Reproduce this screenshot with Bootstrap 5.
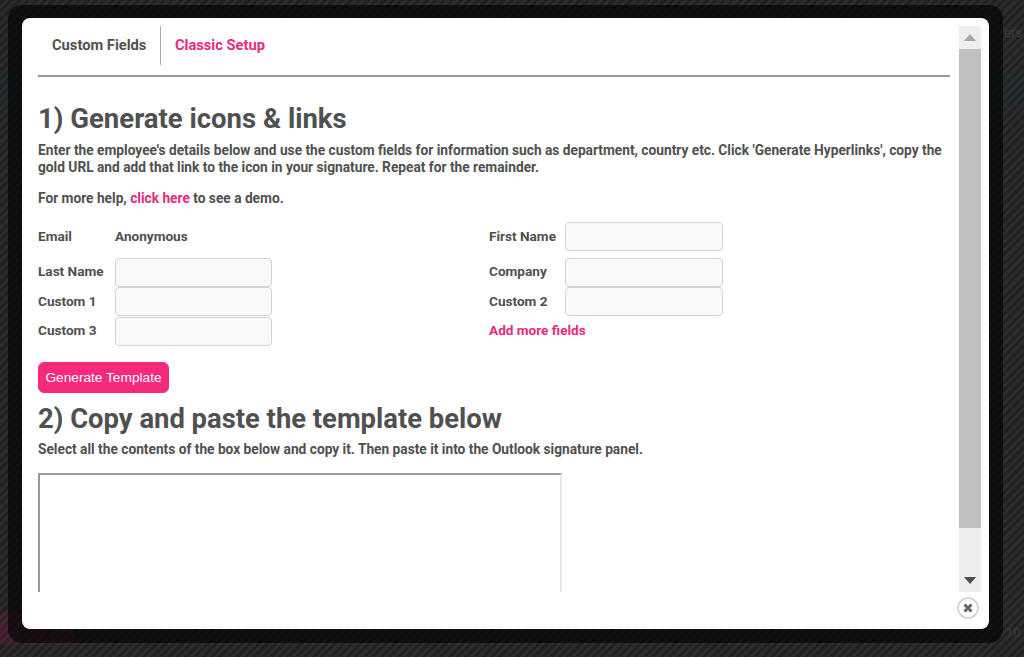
<!DOCTYPE html>
<html lang="en">
<head>
  <meta charset="UTF-8">
  <title>Signature setup</title>
  <link href="https://cdn.jsdelivr.net/npm/bootstrap@5.3.0/dist/css/bootstrap.min.css" rel="stylesheet">
  <style>
    html, body { height: 657px; overflow: hidden; }
    body {
      font-family: Roboto, "Liberation Sans", sans-serif;
      color: #505050;
      background: repeating-linear-gradient(-45deg, #2c2c2c 0 3px, #212121 3px 6px);
    }
    a { color: #e9297f; text-decoration: none; }

    /* what shows faintly behind the overlay */
    .under-band { position: absolute; left: 0; right: 0; top: 73px; height: 35px; background: rgba(0, 70, 80, .14); }
    .under-btn { position: absolute; top: 612px; width: 24px; height: 33px; border-radius: 5px; background: rgba(150, 20, 80, .22); }
    .under-text { position: absolute; color: #3a3a3a; font-size: 13px; white-space: nowrap; }

    .modal-shell {
      position: absolute; left: 8px; top: 5px; width: 995px; height: 638px;
      padding: 13px 14px;
      border-radius: 14px;
      background: rgba(0, 0, 0, .62);
    }
    .modal-sheet {
      position: relative; height: 611px;
      padding: 8px 8px 37px 16px;
      background: #fff;
      border-radius: 8px;
    }
    .scroll-view { height: 566px; overflow: hidden; }
    .scroll-body { flex: 0 0 912px; width: 912px; height: 566px; overflow: hidden; }

    .tab-row { height: 41px; }
    .tab-item { font-size: 14.7px; font-weight: 700; padding: 0 14px; height: 39px; line-height: 39px; }
    .tab-item:first-child { color: #505050; border-right: 1px solid #aaa; }
    .tab-item + .tab-item { padding-left: 13.5px; }
    .tab-rule { height: 2px; margin-top: 8px; background: #999; }

    h1.step-title { font-size: 27.4px; font-weight: 700; line-height: 34px; margin: 0; color: #505050; }
    .first-title { margin-top: 25px !important; font-size: 27.5px !important; }
    .step-text { font-size: 13.73px; font-weight: 700; line-height: 17px; margin: 0; }

    .field-cols { display: flex; margin-top: 15px; font-size: 13.6px; font-weight: 700; }
    .field-col { width: 451px; }
    .field-col + .field-col .field-label { width: 76px; }
    .field-col + .field-col .field-box { width: 158px; }
    .field-row { display: flex; align-items: center; height: 29.3px; }
    .field-row.spaced { height: 29px; margin-bottom: 7px; }
    .field-row:not(.spaced) .field-label, .field-row > a { margin-top: -2px; }
    .field-label { width: 77px; flex: none; }
    .field-box {
      width: 157px; height: 29px; flex: none;
      background: #f9f9f9;
      border: 1px solid #d4d4d4;
      border-radius: 4px;
      padding: 0 6px;
      outline: 0;
    }
    .btn-generate {
      --bs-btn-bg: #f5297e; --bs-btn-border-color: #f5297e; --bs-btn-color: #fff;
      --bs-btn-hover-bg: #e01f6f; --bs-btn-hover-border-color: #e01f6f; --bs-btn-hover-color: #fff;
      font-family: "Liberation Sans", Arial, sans-serif;
      font-size: 13.7px; line-height: 15px;
      padding: 7px 0; height: 31px; width: 131px;
      border-radius: 6px;
      margin-top: 16px;
      white-space: nowrap;
    }
    .template-box {
      display: block; width: 524px; height: 200px; margin-top: 15px;
      border-style: solid; border-width: 2px;
      border-color: #999 #e8e8e8 #e8e8e8 #999;
      border-radius: 0; background: #fff; resize: none;
    }

    .fake-scroll { width: 22px; margin-left: 9px; flex: none; background: #eee; display: flex; flex-direction: column; }
    .scroll-arrow { height: 23px; flex: none; display: flex; align-items: center; justify-content: center; }
    .scroll-thumb { height: 479px; flex: none; background: #bfbfbf; }
    .scroll-track { flex: 1; }
    .close-round { position: absolute; right: 10px; bottom: 10px; width: 22px; height: 22px; padding: 0; border: 0; background: none; display: block; transform: translateY(-2px); }
  </style>
</head>
<body class="position-relative">
  <div class="under-band"></div>
  <div class="under-btn" style="left:-2px"></div>
  <div class="under-btn" style="left:23px"></div>
  <div class="under-btn" style="left:50px"></div>
  <div class="under-text" style="left:1004px;top:23px">ers</div>
  <div class="under-text" style="left:1006px;top:623px">10</div>

  <div class="modal-shell">
    <div class="modal-sheet">
      <div class="scroll-view d-flex">
        <div class="scroll-body">
          <div class="tab-row d-flex">
            <a class="tab-item" href="#">Custom Fields</a>
            <a class="tab-item" href="#">Classic Setup</a>
          </div>
          <div class="tab-rule"></div>

          <h1 class="step-title first-title">1) Generate icons &amp; links</h1>
          <p class="step-text" style="margin-top:6px">Enter the employee's details below and use the custom fields for information such as department, country etc. Click 'Generate Hyperlinks', copy the gold URL and add that link to the icon in your signature. Repeat for the remainder.</p>
          <p class="step-text" style="margin-top:14px">For more help, <a href="#">click here</a> to see a demo.</p>

          <div class="field-cols">
            <div class="field-col">
              <div class="field-row spaced"><span class="field-label">Email</span><span>Anonymous</span></div>
              <div class="field-row"><span class="field-label">Last Name</span><input class="field-box" type="text"></div>
              <div class="field-row"><span class="field-label">Custom 1</span><input class="field-box" type="text"></div>
              <div class="field-row"><span class="field-label">Custom 3</span><input class="field-box" type="text"></div>
            </div>
            <div class="field-col">
              <div class="field-row spaced"><span class="field-label">First Name</span><input class="field-box" type="text"></div>
              <div class="field-row"><span class="field-label">Company</span><input class="field-box" type="text"></div>
              <div class="field-row"><span class="field-label">Custom 2</span><input class="field-box" type="text"></div>
              <div class="field-row"><a href="#">Add more fields</a></div>
            </div>
          </div>

          <button class="btn btn-generate" type="button">Generate Template</button>

          <h1 class="step-title" style="margin-top:9px">2) Copy and paste the template below</h1>
          <p class="step-text" style="margin-top:5px">Select all the contents of the box below and copy it. Then paste it into the Outlook signature panel.</p>
          <textarea class="template-box"></textarea>
        </div>
        <div class="fake-scroll">
          <div class="scroll-arrow"><svg width="12" height="7" viewBox="0 0 12 7"><path d="M6 0 12 7H0z" fill="#a6a6a6"/></svg></div>
          <div class="scroll-thumb"></div>
          <div class="scroll-track"></div>
          <div class="scroll-arrow"><svg width="12" height="7" viewBox="0 0 12 7"><path d="M0 0H12L6 7z" fill="#505050"/></svg></div>
        </div>
      </div>
      <button class="close-round" type="button" aria-label="Close">
        <svg width="22" height="22" viewBox="0 0 22 22"><circle cx="11" cy="11" r="10" fill="#fff" stroke="#d0d0d0" stroke-width="1.6"/><path d="M7.5 7.5 14.5 14.5M14.5 7.5 7.5 14.5" stroke="#666" stroke-width="3"/></svg>
      </button>
    </div>
  </div>
  <script src="https://cdn.jsdelivr.net/npm/bootstrap@5.3.0/dist/js/bootstrap.bundle.min.js"></script>
</body>
</html>
